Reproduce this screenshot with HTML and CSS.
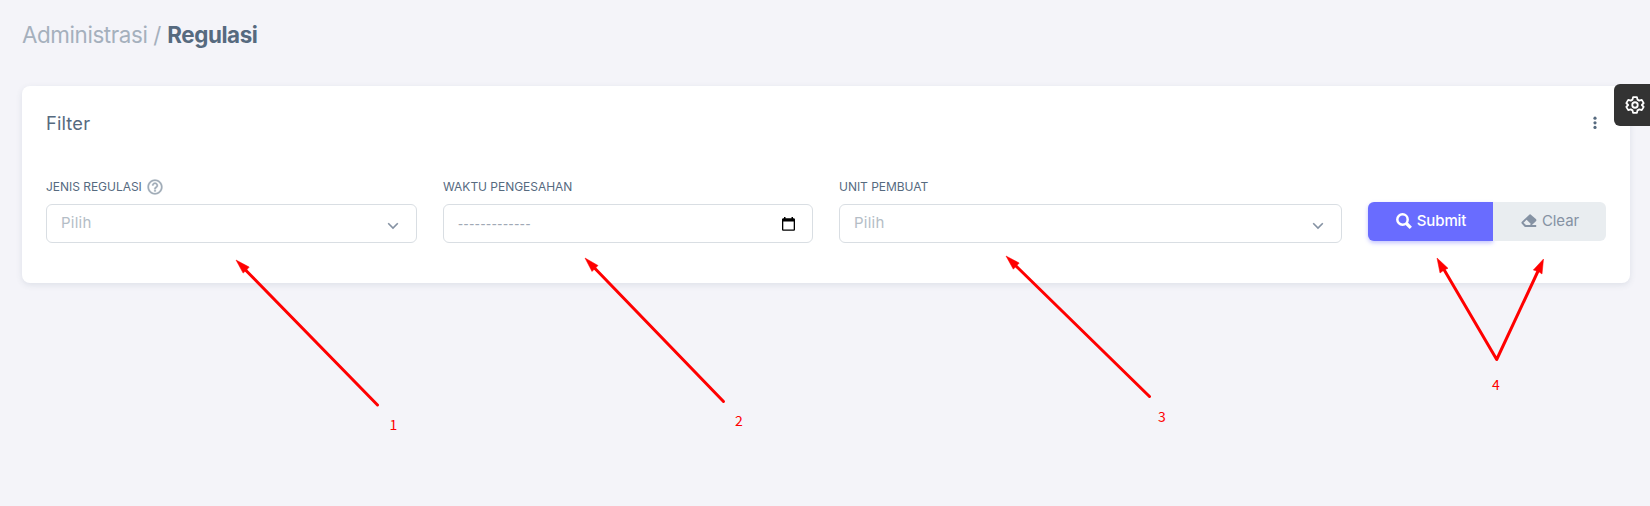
FILE: index.html
```
<!DOCTYPE html>
<html lang="id">
<head>
<meta charset="utf-8">
<title>Regulasi</title>
<link rel="stylesheet" href="styles.css">
</head>
<body>
<main class="page">
  <h1 class="breadcrumb"><span class="crumb-parent">Administrasi /</span> <span class="crumb-current">Regulasi</span></h1>
  <section class="card">
    <header class="card-header">
      <h2 class="card-title">Filter</h2>
      <svg class="dots" width="4" height="14" viewBox="0 0 4 14"><circle cx="2" cy="2.2" r="1.600"/><circle cx="2" cy="6.8" r="1.600"/><circle cx="2" cy="11.4" r="1.600"/></svg>
    </header>
    <form class="filters">
      <div class="field">
        <div class="label"><span class="label-text">JENIS REGULASI</span>
          <svg class="help" width="18" height="18" viewBox="0 0 24 24"><path d="M12 2C6.500 2 2 6.500 2 12s4.500 10 10 10 10-4.500 10-10S17.500 2 12 2zm0 18c-4.400 0-8-3.600-8-8s3.600-8 8-8 8 3.600 8 8-3.600 8-8 8z"/><path d="M11 16h2v2h-2zM12 6c-2.200 0-4 1.800-4 4h2c0-1.100.9-2 2-2s2 .9 2 2c0 .7-.4 1-1.300 1.700-.4.300-.8.600-1.100.900-.6.700-.6 1.500-.6 1.900v.5h2v-.5c.1-.4.400-.6 1-1.100 1-.8 2-1.600 2-3.400 0-2.200-1.800-4-4-4z"/></svg>
        </div>
        <div class="control"><span class="placeholder">Pilih</span><svg class="chevron" width="12" height="8" viewBox="0 0 12 8"><path d="M1.200 1.300 6 6.100l4.800-4.800"/></svg></div>
      </div>
      <div class="field">
        <div class="label"><span class="label-text">WAKTU PENGESAHAN</span></div>
        <div class="control date"><span class="dashes">-------------</span><svg class="calendar" width="13" height="14" viewBox="0 0 13 14"><path fill-rule="evenodd" d="M2 0h1.500v1.300h6V0H11v1.300h.7c.7 0 1.300.6 1.300 1.300v9.900c0 .7-.6 1.300-1.300 1.300H1.300C.6 13.800 0 13.200 0 12.500V2.600c0-.7.6-1.300 1.300-1.300H2zM1.300 4.500v8h10.400v-8z"/></svg></div>
      </div>
      <div class="field">
        <div class="label"><span class="label-text">UNIT PEMBUAT</span></div>
        <div class="control"><span class="placeholder">Pilih</span><svg class="chevron" width="12" height="8" viewBox="0 0 12 8"><path d="M1.200 1.300 6 6.100l4.800-4.800"/></svg></div>
      </div>
      <div class="actions">
        <button type="button" class="btn submit"><svg width="16" height="16" viewBox="0 0 16 16"><circle cx="6.500" cy="6.500" r="5.200" fill="none" stroke="#fff" stroke-width="2.500"/><path d="m10.500 10.500 4.300 4.300" stroke="#fff" stroke-width="3.200"/></svg><span class="submit-text">Submit</span></button>
        <button type="button" class="btn clear"><svg width="16" height="14" viewBox="0 0 16 14"><path fill="#8592a3" fill-rule="evenodd" d="M8 .9.900 7.700a1.500 1.500 0 0 0 0 2.100l2.700 2.900c.3.300.7.400 1.100.4h10.500v-2h-4.300l4-3.900a1.500 1.500 0 0 0 0-2.100L10.200.9a1.500 1.500 0 0 0-2.200 0zM5.600 5.800l4.300 4.300-1 1H5L2.500 8.800z"/></svg><span class="clear-text">Clear</span></button>
      </div>
    </form>
  </section>
</main>
<button type="button" class="settings" aria-label="Settings"><svg width="20" height="20" viewBox="0 0 24 24"><path d="M9.700 2.500h4.600l.7 3 2.100 1.200 3-.9 2.300 4-2.200 2.200 2.200 2.200-2.300 4-3-.9-2.100 1.200-.7 3H9.700l-.7-3-2.100-1.200-3 .9-2.300-4L3.800 12 1.600 9.800l2.300-4 3 .9L9 5.500z"/><circle cx="12" cy="12" r="3.300"/></svg></button>
<svg class="annotations" width="1650" height="506" viewBox="0 0 1650 506">
  <g class="arrows">
    <path d="M377.500 405 246 270.500"/><path d="M723.500 401.500 595 268.500"/><path d="M1149.500 396.500 1016 266"/><path d="M1442.500 267 1496.700 359.500 1539 269"/>
  </g>
  <g class="heads">
    <path d="M236 260 249.200 267.100 246.300 270.300 243.100 273.100z"/>
    <path d="M585 258 598 265.500 595 268.500 592 271.500z"/>
    <path d="M1006 256 1019.200 263 1016.300 266 1013.300 269.200z"/>
    <path d="M1437 258 1448 268.300 1444 270 1440 273z"/>
    <path d="M1543.500 259 1542 274 1538.500 271.500 1533.300 270z"/>
  </g>
  <g class="numbers"><text x="389.500" y="430">1</text><text x="735" y="426">2</text><text x="1158" y="422">3</text><text x="1492" y="390">4</text></g>
</svg>
</body>
</html>
```

FILE: styles.css
```
* { box-sizing: border-box; }
body { margin: 0; width: 1650px; height: 506px; overflow: hidden; position: relative; background: #f4f4f9; color: #566a7f; font-family: Inter, "Liberation Sans", sans-serif; }
.page { padding: 18px 20px 0 22px; }
.breadcrumb { margin: 0; height: 68px; line-height: 33px; font-size: 22.4px; font-weight: 400; white-space: nowrap; }
.crumb-parent { color: #a5b0bd; letter-spacing: -.4px; }
.crumb-current { font-weight: 700; letter-spacing: -.43px; }
.card { height: 197px; padding: 24px; background: #fff; border-radius: 8px; box-shadow: 0 2px 6px rgba(67, 89, 113, .12); }
.card-header { display: flex; justify-content: space-between; align-items: flex-start; height: 68px; padding-right: 9px; }
.card-title { margin: 0; font-size: 18.300px; line-height: 26px; font-weight: 400; letter-spacing: .15px; }
.dots { margin-top: 6px; fill: #566a7f; }
.filters { display: grid; grid-template-columns: 371px 370px 503px 238px; gap: 26px; }
.label { display: flex; align-items: center; gap: 4px; height: 18px; margin-bottom: 8px; font-size: 12px; white-space: nowrap; }
.label-text { margin-bottom: 2px; letter-spacing: -.03px; }
.help { fill: #a1acb8; stroke: #a1acb8; stroke-width: .4; }
.control { display: flex; justify-content: space-between; align-items: center; height: 39px; padding: 0 17px 0 14px; border: 1px solid #d9dee3; border-radius: 6px; background: #fff; font-size: 15px; }
.placeholder { color: #b4bdc6; line-height: 20px; margin-bottom: 2px; letter-spacing: .25px; }
.chevron { margin-top: 4px; fill: none; stroke: #8592a3; stroke-width: 1.6; }
.date { color: #a0a9b5; }
.dashes { font-family: "Liberation Sans", sans-serif; letter-spacing: .62px; }
.calendar { fill: #000; }
.actions { display: flex; height: 39px; margin-top: 24px; border-radius: 6px; }
.btn { display: flex; align-items: center; justify-content: center; gap: 5px; border: 0; padding: 0 0 2px 1px; font: 15px Inter, "Liberation Sans", sans-serif; }
.submit { width: 125px; color: #fff; background: #696cff; border-radius: 6px 0 0 6px; box-shadow: 0 2px 4px rgba(105, 108, 255, .4); font-weight: 500; }
.submit-text, .clear-text { letter-spacing: -.1px; }
.clear { width: 113px; color: #8592a3; background: #e9edf0; border-radius: 0 6px 6px 0; z-index: 1; }
.settings { position: absolute; right: 0; top: 84px; width: 36px; height: 42px; display: flex; align-items: center; padding: 0 0 0 11px; border: 0; border-radius: 6px 0 0 6px; background: #333; }
.settings svg { flex: none; fill: none; stroke: #fff; stroke-width: 2.2; stroke-linejoin: round; }
.annotations { position: absolute; left: 0; top: 0; z-index: 2; pointer-events: none; }
.arrows { fill: none; stroke: #f00; stroke-width: 3; stroke-linecap: round; stroke-linejoin: round; }
.heads { fill: #f00; stroke: #f00; stroke-width: .5; }
.numbers { fill: #f00; font: 14px "Noto Sans CJK SC", sans-serif; }
```
